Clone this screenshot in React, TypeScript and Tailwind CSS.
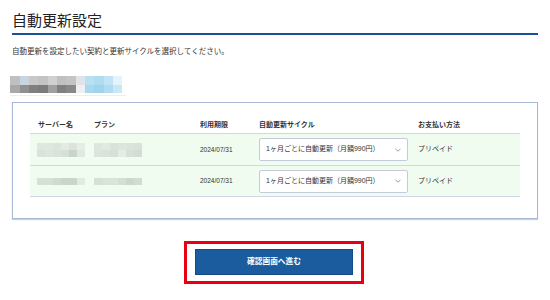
const font = { fontFamily: '"Liberation Sans", "Noto Sans CJK JP", sans-serif' };

const topCells = ["#c0c0c0", "#c8d4e0", "#c8c8c8", "#c4c4c4", "#d0d0d0", "#c0c0c0", "#c4c4c4", "#e0e4ea", "#b8e0f0", "#b0dcf0", "#c0e4f4", "#e4f4fc"];
const bottomCells = ["#a8a8a8", "#909090", "#808080", "#7c7c7c", "#a0a0a0", "#808080", "#888888", "#f0f0f0", "#a8d8ef", "#a0d4ee", "#b0dcf2", "#c8e8f8"];

function Mosaic({ rows, big }: { rows: string[][]; big?: boolean }) {
  return (
    <div className="flex flex-col">
      {rows.map((r, i) => (
        <div key={i} className="flex">
          {r.map((c, j) => (
            <div
              key={j}
              className={big ? (j % 3 === 0 ? "h-[8.5px] w-[10px]" : "h-[8.5px] w-[9px]") : "h-[7px] w-[8px]"}
              style={{ backgroundColor: c }}
            />
          ))}
        </div>
      ))}
    </div>
  );
}

const rows = [
  {
    server: [
      ["#dfe8df", "#dfe8df", "#dbe5db", "#e2eae2", "#dae4da", "#e6ede6"],
      ["#d9e3d9", "#dce6dc", "#d9e3d9", "#d6e0d6", "#c9d5c9", "#e0e9e0"],
    ],
    plan: [
      ["#dee7de", "#e1e9e1", "#d9e3d9", "#dde6dd", "#dae4da", "#d8e2d8"],
      ["#dbe5db", "#d9e3d9", "#d6e0d6", "#e5ece5", "#d6e0d6", "#d3ddd3"],
    ],
  },
  {
    server: [["#d6e0d6", "#d6e0d6", "#d0dbd0", "#cbd6cb", "#cbd6cb", "#e2eae2"]],
    plan: [["#d6e0d6", "#d9e3d9", "#dae4da", "#d4ded4", "#cdd8cd", "#d2dcd2"]],
  },
];

const cols = "grid grid-cols-[56px_106px_59px_159px_108px]";

export default function App() {
  return (
    <div className="h-[300px] w-[550px] bg-white text-[#333]" style={font}>
      <div className="mx-[12px] border-b-2 border-[#1d4f9c] pt-[10px] pb-[1px]">
        <h1 className="text-[15px] leading-[22px] font-normal text-[#222]">自動更新設定</h1>
      </div>
      <p className="mx-[12px] mt-[11px] text-[7.5px] leading-[12px]">
        自動更新を設定したい契約と更新サイクルを選択してください。
      </p>
      <div className="ml-[10px] mt-[18px] w-[116px] border-b border-[#eeeeee] pb-[2px]">
        <Mosaic big rows={[topCells, bottomCells]} />
      </div>
      <div className="mx-[12px] mt-[6px] border border-[#a6b8d6] px-[17px] pt-[14px] pb-[21px] shadow-[0_1px_1px_rgba(120,140,180,0.4)]">
        <div className={`${cols} h-[16px] items-center text-[7px] font-bold`}>
          <div className="pl-[8px]">サーバー名</div>
          <div className="pl-[8px]">プラン</div>
          <div className="pl-[8px]">利用期限</div>
          <div className="pl-[8px]">自動更新サイクル</div>
          <div className="pl-[8px]">お支払い方法</div>
        </div>
        {rows.map((r, i) => (
          <div
            key={i}
            className={`${cols} h-[32px] items-center border-t border-[#cdd8e6] bg-[#effcef] text-[7px] ${i === rows.length - 1 ? "border-b" : ""}`}
          >
            <div className="pl-[7px]">
              <Mosaic rows={r.server} />
            </div>
            <div className="pl-[8px]">
              <Mosaic rows={r.plan} />
            </div>
            <div className="pl-[8px] text-[6.5px]">2024/07/31</div>
            <div className="pl-[8px]">
              <div className="flex h-[23px] w-[149px] items-center justify-between rounded-[2px] border border-[#c3ccd8] bg-white pr-[6px] pl-[6px] text-[7px]">
                <span>1ヶ月ごとに自動更新（月額990円）</span>
                <svg width="6" height="4" viewBox="0 0 6 4" fill="none">
                  <path d="M0.5 0.8 L3 3.2 L5.5 0.8" stroke="#8797b3" strokeWidth="0.9" />
                </svg>
              </div>
            </div>
            <div className="pl-[8px]">プリペイド</div>
          </div>
        ))}
      </div>
      <div className="mt-[22px] flex justify-center">
        <div className="ml-[-2px] border-[3px] border-[#e60012] px-[8px] pt-[5px] pb-[6px]">
          <button className="flex h-[26px] w-[158px] items-center justify-center border border-[#144a86] bg-[#1b5c9e] text-[7.7px] font-bold text-white">
            確認画面へ進む
          </button>
        </div>
      </div>
    </div>
  );
}
